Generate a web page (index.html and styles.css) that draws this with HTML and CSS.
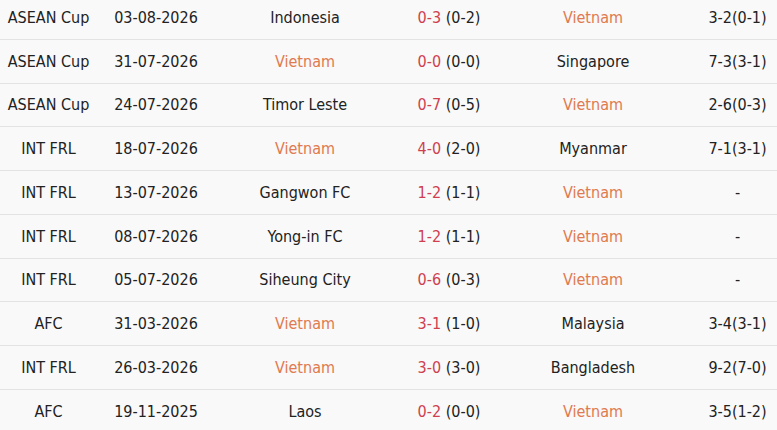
FILE: index.html
```html
<!DOCTYPE html>
<html>
<head>
<meta charset="utf-8">
<link rel="stylesheet" href="styles.css">
</head>
<body>
<div class="table">
  <div class="row"><span class="c comp">ASEAN Cup</span><span class="c date">03-08-2026</span><span class="c team">Indonesia</span><span class="c score"><span class="ft">0-3</span> (0-2)</span><span class="c team vn">Vietnam</span><span class="c last">3-2(0-1)</span></div>
  <div class="row"><span class="c comp">ASEAN Cup</span><span class="c date">31-07-2026</span><span class="c team vn">Vietnam</span><span class="c score"><span class="ft">0-0</span> (0-0)</span><span class="c team">Singapore</span><span class="c last">7-3(3-1)</span></div>
  <div class="row"><span class="c comp">ASEAN Cup</span><span class="c date">24-07-2026</span><span class="c team">Timor Leste</span><span class="c score"><span class="ft">0-7</span> (0-5)</span><span class="c team vn">Vietnam</span><span class="c last">2-6(0-3)</span></div>
  <div class="row"><span class="c comp">INT FRL</span><span class="c date">18-07-2026</span><span class="c team vn">Vietnam</span><span class="c score"><span class="ft">4-0</span> (2-0)</span><span class="c team">Myanmar</span><span class="c last">7-1(3-1)</span></div>
  <div class="row"><span class="c comp">INT FRL</span><span class="c date">13-07-2026</span><span class="c team">Gangwon FC</span><span class="c score"><span class="ft">1-2</span> (1-1)</span><span class="c team vn">Vietnam</span><span class="c last">-</span></div>
  <div class="row"><span class="c comp">INT FRL</span><span class="c date">08-07-2026</span><span class="c team">Yong-in FC</span><span class="c score"><span class="ft">1-2</span> (1-1)</span><span class="c team vn">Vietnam</span><span class="c last">-</span></div>
  <div class="row"><span class="c comp">INT FRL</span><span class="c date">05-07-2026</span><span class="c team">Siheung City</span><span class="c score"><span class="ft">0-6</span> (0-3)</span><span class="c team vn">Vietnam</span><span class="c last">-</span></div>
  <div class="row"><span class="c comp">AFC</span><span class="c date">31-03-2026</span><span class="c team vn">Vietnam</span><span class="c score"><span class="ft">3-1</span> (1-0)</span><span class="c team">Malaysia</span><span class="c last">3-4(3-1)</span></div>
  <div class="row"><span class="c comp">INT FRL</span><span class="c date">26-03-2026</span><span class="c team vn">Vietnam</span><span class="c score"><span class="ft">3-0</span> (3-0)</span><span class="c team">Bangladesh</span><span class="c last">9-2(7-0)</span></div>
  <div class="row"><span class="c comp">AFC</span><span class="c date">19-11-2025</span><span class="c team">Laos</span><span class="c score"><span class="ft">0-2</span> (0-0)</span><span class="c team vn">Vietnam</span><span class="c last">3-5(1-2)</span></div>
</div>
</body>
</html>
```
FILE: styles.css
```css
html, body {
  margin: 0;
  padding: 0;
  background: #f9f9f9;
  overflow: hidden;
}
.table {
  margin-top: -4px;
  font-family: "DejaVu Sans Condensed", "DejaVu Sans", Verdana, sans-serif;
  font-size: 16px;
  color: #222;
}
.row {
  display: grid;
  grid-template-columns: 97px 118px 180px 108px 180px 94px;
  height: 42.75px;
  align-items: center;
  border-bottom: 1px solid #e3e3e3;
}
.c {
  text-align: center;
  white-space: nowrap;
}
.last {
  padding-left: 15px;
}
.vn {
  color: #e07a4f;
}
.ft {
  color: #cf3f4f;
}
```
